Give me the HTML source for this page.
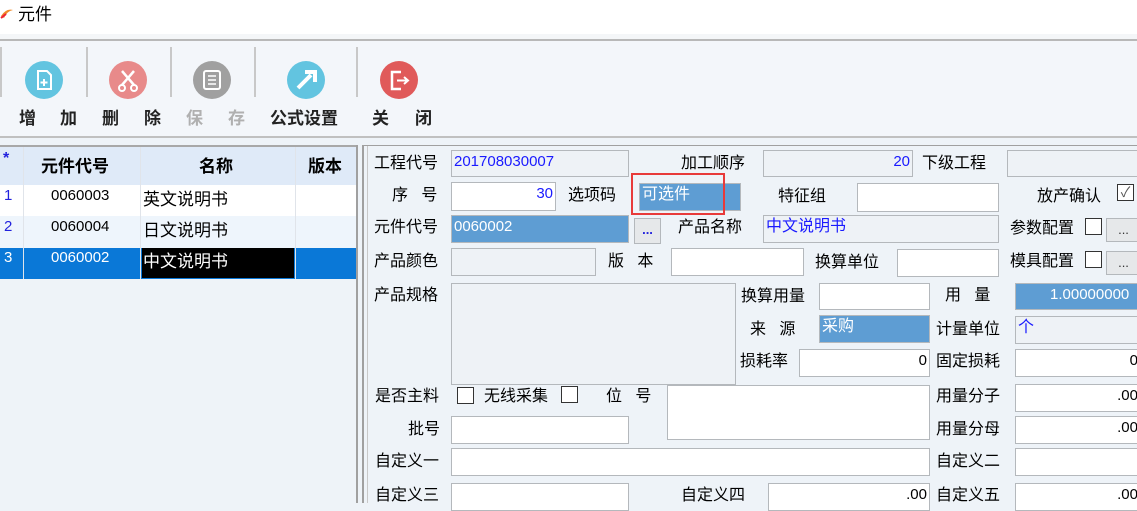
<!DOCTYPE html>
<html><head><meta charset="utf-8"><style>
*{margin:0;padding:0;box-sizing:border-box}
body{width:1137px;height:503px;overflow:hidden;background:#eef3f8;font-family:"Liberation Sans","Noto Sans CJK SC",sans-serif;font-size:16px;color:#000;position:relative}
.a{position:absolute;white-space:nowrap}
.l{position:absolute;white-space:nowrap;font-size:16px;line-height:20px}
.i{position:absolute;border:1px solid #b4b8bc;background:#eef2f6;font-size:15px;line-height:22px;padding:0 2px;color:#1a1aff}
.w{background:#fff}
.b{background:#5e9dd3;color:#fff}
.r{text-align:right}
.cb{position:absolute;width:17px;height:17px;border:1px solid #333;background:#fff}
.btn{position:absolute;border:1px solid #b4b8bc;background:#e6e8ea;font-size:13px;text-align:center;line-height:22px;color:#333}
.sep{position:absolute;top:47px;width:2px;height:50px;background:#c8c8c8}
.ic{position:absolute;top:61px;width:38px;height:38px;border-radius:50%}
.tb{position:absolute;top:108px;font-size:17px;line-height:22px;color:#222;font-weight:bold}
</style></head><body>
<div class="a" style="left:0;top:0;width:1137px;height:34px;background:#fff"></div>
<svg class="a" style="left:0;top:6px" width="14" height="14"><path d="M1 10 Q6 2 13 4 Q7 5 4 12Z" fill="#f08a28"/><path d="M1 12 L6 8" stroke="#e23" stroke-width="2"/></svg>
<div class="a" style="left:18px;top:3px;font-size:17px;line-height:24px">元件</div>
<div class="a" style="left:0;top:34px;width:1137px;height:5px;background:#f4f6f8"></div>
<div class="a" style="left:0;top:39px;width:1137px;height:2px;background:#b8b8b8"></div>
<div class="a" style="left:0;top:41px;width:1137px;height:96px;background:#f3f6fa"></div>
<div class="a" style="left:0;top:136px;width:1137px;height:2px;background:#c0c0c0"></div>
<div class="sep" style="left:0"></div><div class="sep" style="left:86px"></div><div class="sep" style="left:170px"></div><div class="sep" style="left:254px"></div><div class="sep" style="left:356px"></div>
<div class="ic" style="left:25px;background:#62c4e0"><svg width="38" height="38"><path d="M13 10h9l4 4v14h-13z" fill="none" stroke="#fff" stroke-width="2"/><path d="M19 18v7M15.5 21.5h7" stroke="#fff" stroke-width="2"/></svg></div>
<div class="ic" style="left:109px;background:#e88a8a"><svg width="38" height="38"><path d="M13 10l12 14M25 10l-12 14" stroke="#fff" stroke-width="2.5"/><circle cx="13" cy="27" r="3" fill="none" stroke="#fff" stroke-width="2"/><circle cx="25" cy="27" r="3" fill="none" stroke="#fff" stroke-width="2"/></svg></div>
<div class="ic" style="left:193px;background:#a0a0a0"><svg width="38" height="38"><rect x="11" y="10" width="16" height="18" rx="2" fill="none" stroke="#fff" stroke-width="2"/><path d="M15 15h8M15 19h8M15 23h8" stroke="#fff" stroke-width="1.5"/></svg></div>
<div class="ic" style="left:287px;background:#62c4e0"><svg width="38" height="38"><path d="M11 27l13-13M18 11h10v10" stroke="#fff" stroke-width="4" fill="none"/></svg></div>
<div class="ic" style="left:380px;background:#e05a5a"><svg width="38" height="38"><path d="M21 11h-9v17h9" fill="none" stroke="#fff" stroke-width="2.5"/><path d="M17 19.5h11M24 16l4 3.5-4 3.5" stroke="#fff" stroke-width="2" fill="none"/></svg></div>
<div class="tb" style="left:19px">增</div><div class="tb" style="left:60px">加</div>
<div class="tb" style="left:102px">删</div><div class="tb" style="left:144px">除</div>
<div class="tb" style="left:186px;color:#b0b0b0">保</div><div class="tb" style="left:228px;color:#b0b0b0">存</div>
<div class="tb" style="left:270px">公式设置</div>
<div class="tb" style="left:372px">关</div><div class="tb" style="left:415px">闭</div>
<div class="a" style="left:0;top:145px;width:357px;height:358px;background:#eef3f8"></div>
<div class="a" style="left:0;top:145px;width:357px;height:2px;background:#a8a8a8"></div>
<div class="a" style="left:0;top:147px;width:357px;height:38px;background:#dfeaf8"></div>
<div class="a" style="left:3px;top:150px;color:#22d;font-weight:bold">*</div>
<div class="a" style="left:41px;top:152px;font-weight:bold;font-size:17px">元件代号</div>
<div class="a" style="left:199px;top:152px;font-weight:bold;font-size:17px">名称</div>
<div class="a" style="left:308px;top:152px;font-weight:bold;font-size:17px">版本</div>
<div class="a" style="left:0;top:185px;width:357px;height:31px;background:#fff"></div>
<div class="a" style="left:0;top:216px;width:357px;height:32px;background:#eef5fc"></div>
<div class="a" style="left:0;top:248px;width:357px;height:31px;background:#0a78d7"></div>
<div class="a" style="left:142px;top:248px;width:152px;height:30px;background:#000"></div>
<div class="a" style="left:23px;top:147px;width:1px;height:132px;background:#e0e4ea"></div>
<div class="a" style="left:140px;top:147px;width:1px;height:132px;background:#e0e4ea"></div>
<div class="a" style="left:295px;top:147px;width:1px;height:132px;background:#e0e4ea"></div>
<div class="a" style="left:4px;top:187px;color:#22d;font-size:15px">1</div>
<div class="a" style="left:4px;top:218px;color:#22d;font-size:15px">2</div>
<div class="a" style="left:4px;top:249px;color:#fff;font-size:15px">3</div>
<div class="a" style="left:51px;top:187px;font-size:15px">0060003</div>
<div class="a" style="left:51px;top:218px;font-size:15px">0060004</div>
<div class="a" style="left:51px;top:249px;font-size:15px;color:#fff">0060002</div>
<div class="a" style="left:143px;top:185px;font-size:17px">英文说明书</div>
<div class="a" style="left:143px;top:216px;font-size:17px">日文说明书</div>
<div class="a" style="left:143px;top:247px;font-size:17px;color:#fff">中文说明书</div>
<div class="a" style="left:356px;top:145px;width:2px;height:358px;background:#a0a0a0"></div>
<div class="a" style="left:362px;top:145px;width:2px;height:358px;background:#a0a0a0"></div>
<div class="a" style="left:364px;top:145px;width:773px;height:1px;background:#a0a0a0"></div>
<div class="a" style="left:367px;top:146px;width:1px;height:357px;background:#c8c8c8"></div>
<div class="l" style="left:374px;top:154px">工程代号</div><div class="i" style="left:451px;top:150px;width:178px;height:27px">201708030007</div>
<div class="l" style="left:681px;top:154px">加工顺序</div><div class="i r" style="left:763px;top:150px;width:150px;height:27px">20</div>
<div class="l" style="left:922px;top:154px">下级工程</div><div class="i" style="left:1007px;top:150px;width:135px;height:27px"></div>
<div class="l" style="left:392px;top:186px">序&nbsp;&nbsp;&nbsp;号</div><div class="i w r" style="left:451px;top:182px;width:105px;height:29px">30</div>
<div class="l" style="left:568px;top:186px">选项码</div><div class="i b" style="left:639px;top:183px;width:102px;height:28px;font-size:16px">可选件</div>
<div class="a" style="left:631px;top:173px;width:94px;height:42px;border:2px solid #e83a3a"></div>
<div class="l" style="left:778px;top:187px">特征组</div><div class="i w" style="left:857px;top:183px;width:142px;height:29px"></div>
<div class="l" style="left:1037px;top:187px">放产确认</div><div class="cb" style="left:1117px;top:184px;font-size:14px;line-height:15px;text-align:center;color:#555">✓</div>
<div class="l" style="left:374px;top:218px">元件代号</div><div class="i b" style="left:451px;top:215px;width:178px;height:28px">0060002</div>
<div class="btn" style="left:634px;top:218px;width:27px;height:26px;color:#22d;font-weight:bold">...</div>
<div class="l" style="left:678px;top:218px;width:67px;overflow:hidden">产品名称</div><div class="i" style="left:763px;top:215px;width:236px;height:28px;font-size:16px">中文说明书</div>
<div class="l" style="left:1010px;top:219px">参数配置</div><div class="cb" style="left:1085px;top:218px"></div><div class="btn" style="left:1106px;top:218px;width:35px;height:24px">...</div>
<div class="l" style="left:374px;top:252px">产品颜色</div><div class="i" style="left:451px;top:248px;width:145px;height:28px"></div>
<div class="l" style="left:608px;top:252px">版&nbsp;&nbsp;&nbsp;本</div><div class="i w" style="left:671px;top:248px;width:133px;height:28px"></div>
<div class="l" style="left:815px;top:253px">换算单位</div><div class="i w" style="left:897px;top:249px;width:102px;height:28px"></div>
<div class="l" style="left:1010px;top:252px">模具配置</div><div class="cb" style="left:1085px;top:251px"></div><div class="btn" style="left:1106px;top:251px;width:35px;height:24px">...</div>
<div class="l" style="left:374px;top:286px">产品规格</div><div class="i" style="left:451px;top:283px;width:285px;height:102px"></div>
<div class="l" style="left:741px;top:287px">换算用量</div><div class="i w" style="left:819px;top:283px;width:111px;height:27px"></div>
<div class="l" style="left:945px;top:286px">用&nbsp;&nbsp;&nbsp;量</div><div class="i b r" style="left:1015px;top:283px;width:130px;height:27px;text-align:left;padding-left:34px">1.00000000</div>
<div class="l" style="left:750px;top:320px">来&nbsp;&nbsp;&nbsp;源</div><div class="i b" style="left:819px;top:315px;width:111px;height:28px;font-size:16px">采购</div>
<div class="l" style="left:936px;top:320px">计量单位</div><div class="i" style="left:1015px;top:316px;width:130px;height:28px;font-size:16px">个</div>
<div class="l" style="left:740px;top:352px">损耗率</div><div class="i w r" style="left:799px;top:349px;width:131px;height:28px;color:#000">0</div>
<div class="l" style="left:936px;top:352px">固定损耗</div><div class="i w r" style="left:1015px;top:349px;width:126px;height:28px;color:#000">0</div>
<div class="l" style="left:375px;top:387px">是否主料</div><div class="cb" style="left:457px;top:387px"></div>
<div class="l" style="left:484px;top:387px">无线采集</div><div class="cb" style="left:561px;top:386px"></div>
<div class="l" style="left:606px;top:387px">位&nbsp;&nbsp;&nbsp;号</div><div class="i w" style="left:667px;top:385px;width:263px;height:55px"></div>
<div class="l" style="left:936px;top:387px">用量分子</div><div class="i w r" style="left:1015px;top:384px;width:126px;height:28px;color:#000">.00</div>
<div class="l" style="left:408px;top:420px">批号</div><div class="i w" style="left:451px;top:416px;width:178px;height:28px"></div>
<div class="l" style="left:936px;top:420px">用量分母</div><div class="i w r" style="left:1015px;top:416px;width:126px;height:28px;color:#000">.00</div>
<div class="l" style="left:375px;top:452px">自定义一</div><div class="i w" style="left:451px;top:448px;width:479px;height:28px"></div>
<div class="l" style="left:936px;top:452px">自定义二</div><div class="i w" style="left:1015px;top:448px;width:126px;height:28px"></div>
<div class="l" style="left:375px;top:486px">自定义三</div><div class="i w" style="left:451px;top:483px;width:178px;height:28px"></div>
<div class="l" style="left:681px;top:486px">自定义四</div><div class="i w r" style="left:768px;top:483px;width:162px;height:28px;color:#000">.00</div>
<div class="l" style="left:936px;top:486px">自定义五</div><div class="i w r" style="left:1015px;top:483px;width:126px;height:28px;color:#000">.00</div>
</body></html>
